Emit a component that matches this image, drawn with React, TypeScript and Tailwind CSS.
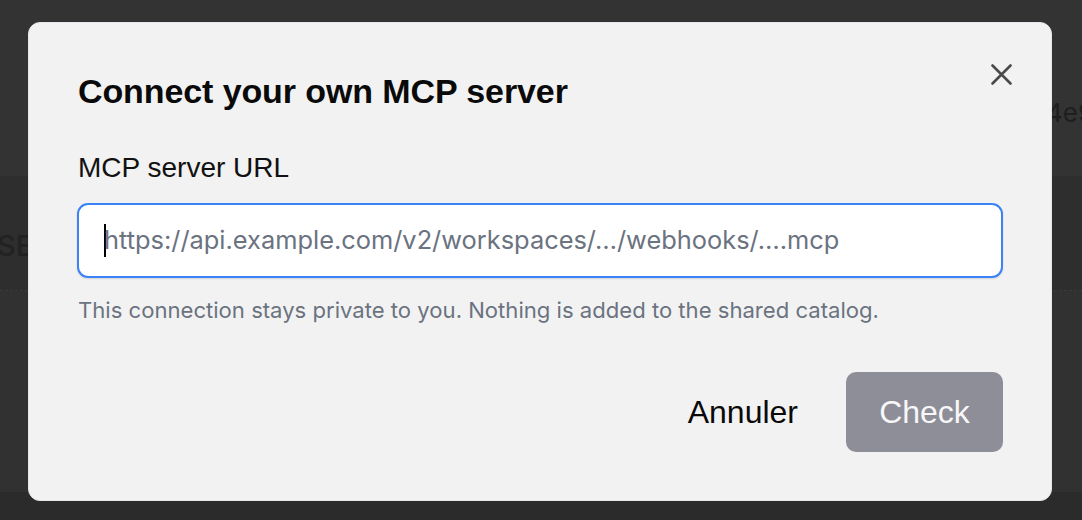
import React from "react";

export default function App() {
  return (
    <div className="relative w-[1082px] h-[520px] overflow-hidden bg-[#333333] font-['Inter',sans-serif]">
      {/* background page */}
      <div className="flex flex-col h-full">
        <div className="h-[176px] bg-[#333333] flex items-center whitespace-nowrap pl-[1046px]">
          <span className="text-[26px] text-[#1e1e1e] font-['Inter',sans-serif] mt-[48px]">4e9</span>
        </div>
        <div className="h-[115px] bg-[#2e2e2e] border-b border-dashed border-[#3a3a3a] flex items-center whitespace-nowrap">
          <span className="ml-[-3px] mt-[26px] text-[29px] font-medium text-[#222222]">SE</span>
        </div>
        <div className="flex-1 bg-[#313131]" />
        <div className="h-[28px] bg-[#2b2b2b] border-t border-[#2a2a2a]" />
      </div>

      {/* modal */}
      <div className="absolute left-[28px] top-[22px] w-[1024px] h-[479px] rounded-[12px] bg-[#f2f2f2] border border-[#e6e6ec] p-[48px] flex flex-col">
        <button className="absolute right-[39px] top-[41px] w-[21px] h-[21px] flex items-center justify-center">
          <svg width="21" height="21" viewBox="0 0 21 21" fill="none">
            <path d="M1.5 1.5L19.5 19.5M19.5 1.5L1.5 19.5" stroke="#4a4a4a" strokeWidth="2.6" strokeLinecap="round" />
          </svg>
        </button>
        <h2 className="ml-[1px] font-['Liberation_Sans',Arial,sans-serif] font-bold text-[34px] leading-[40px] text-[#0a0a0a] tracking-[-0.1px]">
          Connect your own MCP server
        </h2>
        <label className="mt-[41px] ml-[1px] font-['Liberation_Sans',Arial,sans-serif] text-[28px] leading-[32px] text-[#111111]">
          MCP server URL
        </label>
        <div className="mt-[19px] h-[75px] rounded-[11px] border-2 border-[#3b82f6] bg-white shadow-[0_1px_2px_rgba(0,0,0,0.12)] flex items-center pl-[25px] whitespace-nowrap overflow-hidden">
          <span className="w-[2px] h-[33px] bg-black -mr-[2px]" />
          <span className="text-[25.4px] text-[#6b7280]">https://api.example.com/v2/workspaces/…/webhooks/….mcp</span>
        </div>
        <p className="mt-[18px] ml-[1px] text-[22.1px] leading-[28px] text-[#6b7280] whitespace-nowrap">
          This connection stays private to you. Nothing is added to the shared catalog.
        </p>
        <div className="mt-auto flex justify-end items-center gap-[24px]">
          <button className="h-[80px] px-[24px] font-['Liberation_Sans',Arial,sans-serif] text-[32px] text-[#0a0a0a]">
            Annuler
          </button>
          <button className="h-[80px] w-[157px] rounded-[10px] bg-[#8e8e99] font-['Liberation_Sans',Arial,sans-serif] text-[32px] text-[#f7f7f7]">
            Check
          </button>
        </div>
      </div>
    </div>
  );
}
